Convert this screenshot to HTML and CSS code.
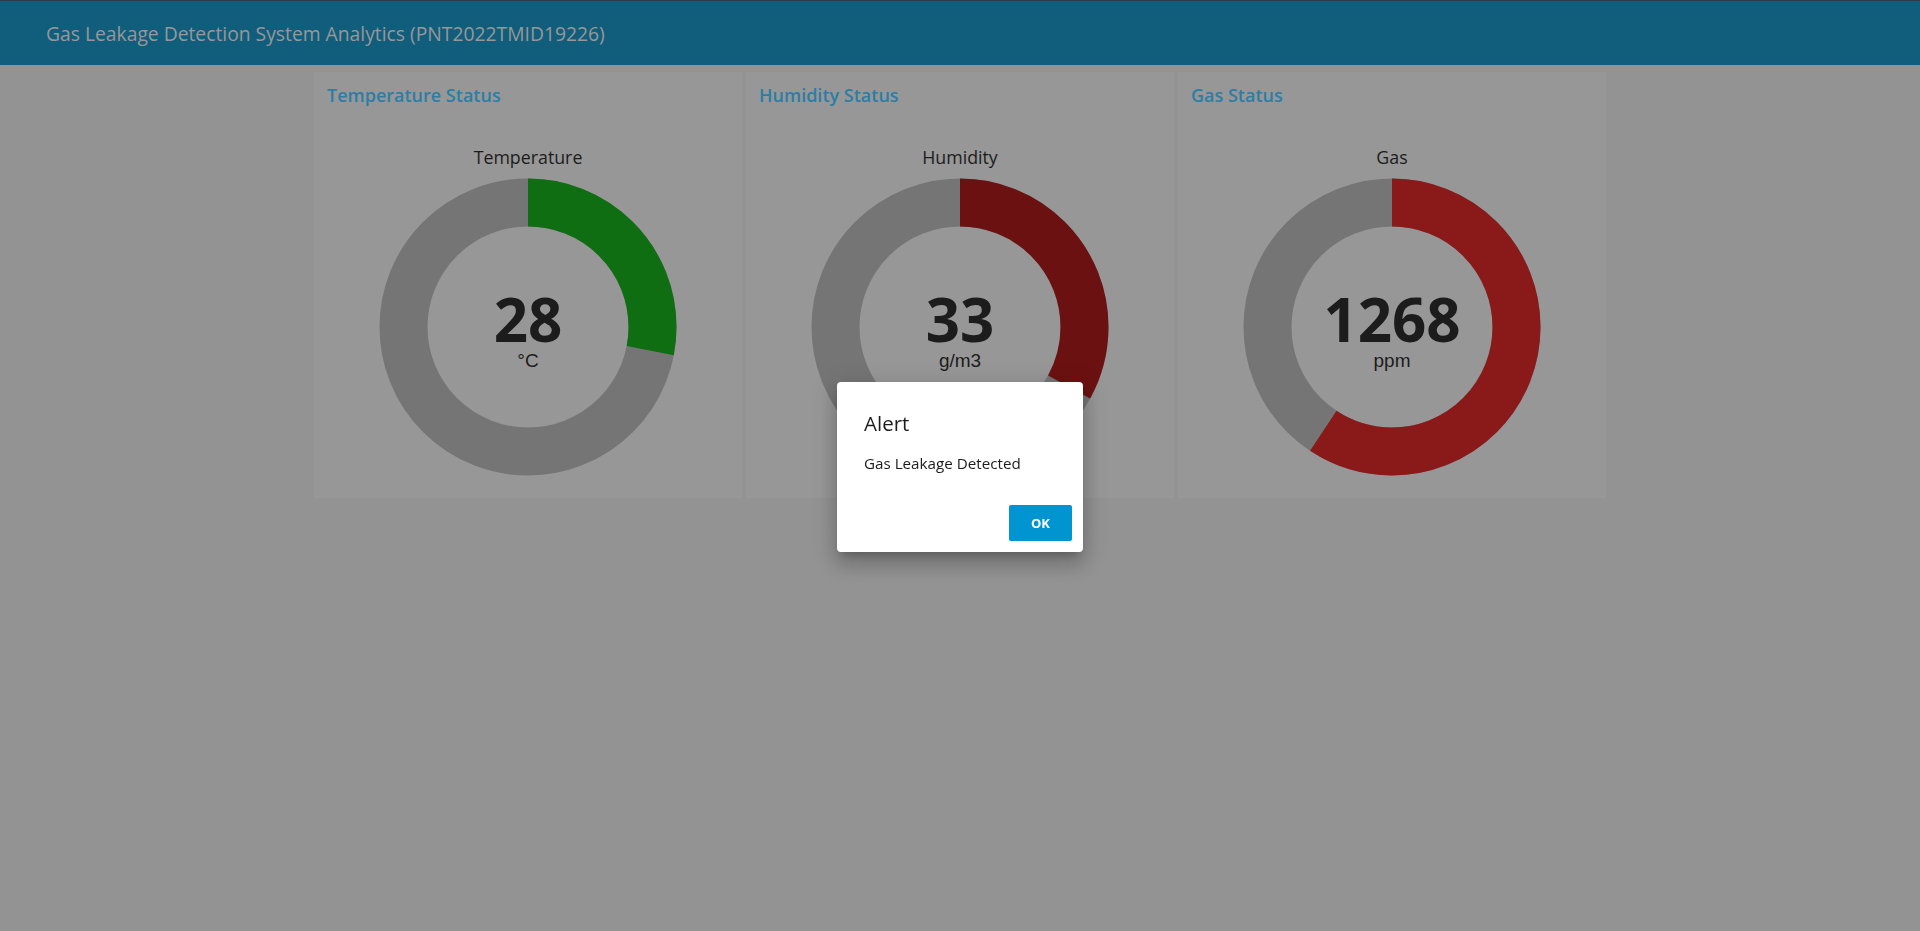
FILE: index.html
```html
<!DOCTYPE html>
<html lang="en">
<head>
<meta charset="utf-8">
<title>Gas Leakage Detection System Analytics</title>
<link rel="stylesheet" href="styles.css">
</head>
<body>
<header class="toolbar">
  <h1 class="toolbar-title">Gas Leakage Detection System Analytics (PNT2022TMID19226)</h1>
</header>
<main class="dashboard">
  <section class="card">
    <h2 class="card-title">Temperature Status</h2>
    <div class="gauge">
      <div class="gauge-label">Temperature</div>
      <div class="donut">
        <svg class="donut-svg" viewBox="0 0 298 298" width="298" height="298">
          <circle class="track" cx="149" cy="149" r="124.5"></circle>
          <circle class="arc arc-green" cx="149" cy="149" r="124.5" style="stroke-dasharray: 219.3 800"></circle>
        </svg>
        <div class="donut-center">
          <div class="donut-value">28</div>
          <div class="donut-unit">°C</div>
        </div>
      </div>
    </div>
  </section>
  <section class="card">
    <h2 class="card-title">Humidity Status</h2>
    <div class="gauge">
      <div class="gauge-label">Humidity</div>
      <div class="donut">
        <svg class="donut-svg" viewBox="0 0 298 298" width="298" height="298">
          <circle class="track" cx="149" cy="149" r="124.5"></circle>
          <circle class="arc arc-darkred" cx="149" cy="149" r="124.5" style="stroke-dasharray: 258.1 800"></circle>
        </svg>
        <div class="donut-center">
          <div class="donut-value">33</div>
          <div class="donut-unit">g/m3</div>
        </div>
      </div>
    </div>
  </section>
  <section class="card">
    <h2 class="card-title">Gas Status</h2>
    <div class="gauge">
      <div class="gauge-label">Gas</div>
      <div class="donut">
        <svg class="donut-svg" viewBox="0 0 298 298" width="298" height="298">
          <circle class="track" cx="149" cy="149" r="124.5"></circle>
          <circle class="arc arc-red" cx="149" cy="149" r="124.5" style="stroke-dasharray: 463.7 800"></circle>
        </svg>
        <div class="donut-center">
          <div class="donut-value">1268</div>
          <div class="donut-unit">ppm</div>
        </div>
      </div>
    </div>
  </section>
</main>
<div class="backdrop">
  <div class="dialog" role="alertdialog">
    <div class="dialog-content">
      <h2 class="dialog-title">Alert</h2>
      <p class="dialog-text">Gas Leakage Detected</p>
    </div>
    <div class="dialog-actions">
      <button class="btn-ok">OK</button>
    </div>
  </div>
</div>
</body>
</html>
```
FILE: styles.css
```css
html, body {
  margin: 0;
  padding: 0;
}
body {
  background: #939393;
  font-family: "Open Sans", "Noto Sans", sans-serif;
  color: #1c1c1c;
  min-height: 931px;
}
.toolbar {
  height: 64px;
  border-top: 1px solid #2b3e4c;
  background: #115e7c;
  display: flex;
  align-items: center;
  padding-left: 46px;
}
.toolbar-title {
  margin: 0;
  font-size: 19.3px;
  font-weight: 400;
  color: #979797;
}
.dashboard {
  display: flex;
  justify-content: center;
  gap: 4px;
  padding-top: 7px;
}
.card {
  width: 428px;
  height: 426px;
  background: #979797;
  box-sizing: border-box;
  padding: 11px 13px 0;
  display: flex;
  flex-direction: column;
}
.card-title {
  margin: 0;
  font-size: 18px;
  line-height: 25px;
  font-weight: 600;
  color: #2a7ea8;
}
.gauge {
  display: flex;
  flex-direction: column;
  align-items: center;
  margin-top: 37px;
}
.gauge-label {
  font-size: 17.8px;
  line-height: 24px;
  font-weight: 500;
  color: #1c1c1c;
  margin-bottom: 9px;
}
.donut {
  position: relative;
  width: 298px;
  height: 298px;
}
.donut-svg {
  display: block;
}
.track {
  fill: none;
  stroke: #757575;
  stroke-width: 48;
}
.arc {
  fill: none;
  stroke-width: 48;
  transform: rotate(-90deg);
  transform-origin: 149px 149px;
}
.arc-green { stroke: #106e12; }
.arc-darkred { stroke: #6c1111; }
.arc-red { stroke: #8a1a1a; }
.donut-center {
  position: absolute;
  left: 0;
  right: 0;
  top: 115px;
  display: flex;
  flex-direction: column;
  align-items: center;
}
.donut-value {
  font-size: 60px;
  line-height: 52px;
  font-weight: 700;
  color: #1c1c1c;
}
.donut-unit {
  font-family: "Liberation Sans", Arial, sans-serif;
  font-size: 19px;
  line-height: 22px;
  color: #1c1c1c;
  margin-top: 5px;
}
.backdrop {
  position: fixed;
  inset: 0;
  display: flex;
  align-items: center;
  justify-content: center;
  padding-top: 3px;
}
.dialog {
  width: 246px;
  height: 170px;
  box-sizing: border-box;
  background: #ffffff;
  border-radius: 4px;
  box-shadow: 0 7px 8px -4px rgba(0,0,0,.2), 0 13px 19px 2px rgba(0,0,0,.14), 0 5px 24px 4px rgba(0,0,0,.12);
  display: flex;
  flex-direction: column;
}
.dialog-content {
  padding: 27px 24px 0 27px;
  flex: 1;
}
.dialog-title {
  margin: 0;
  font-size: 20.5px;
  line-height: 28px;
  font-weight: 500;
  color: #1c1c1c;
}
.dialog-text {
  margin: 16px 0 0;
  font-size: 15.2px;
  line-height: 20px;
  color: #1c1c1c;
}
.dialog-actions {
  display: flex;
  justify-content: flex-end;
  padding: 0 11px 11px 0;
}
.btn-ok {
  width: 63px;
  height: 36px;
  border: none;
  border-radius: 2px;
  background: #0094d0;
  color: #ffffff;
  font-family: "Open Sans", sans-serif;
  font-size: 13px;
  font-weight: 700;
  padding: 0;
}
```
